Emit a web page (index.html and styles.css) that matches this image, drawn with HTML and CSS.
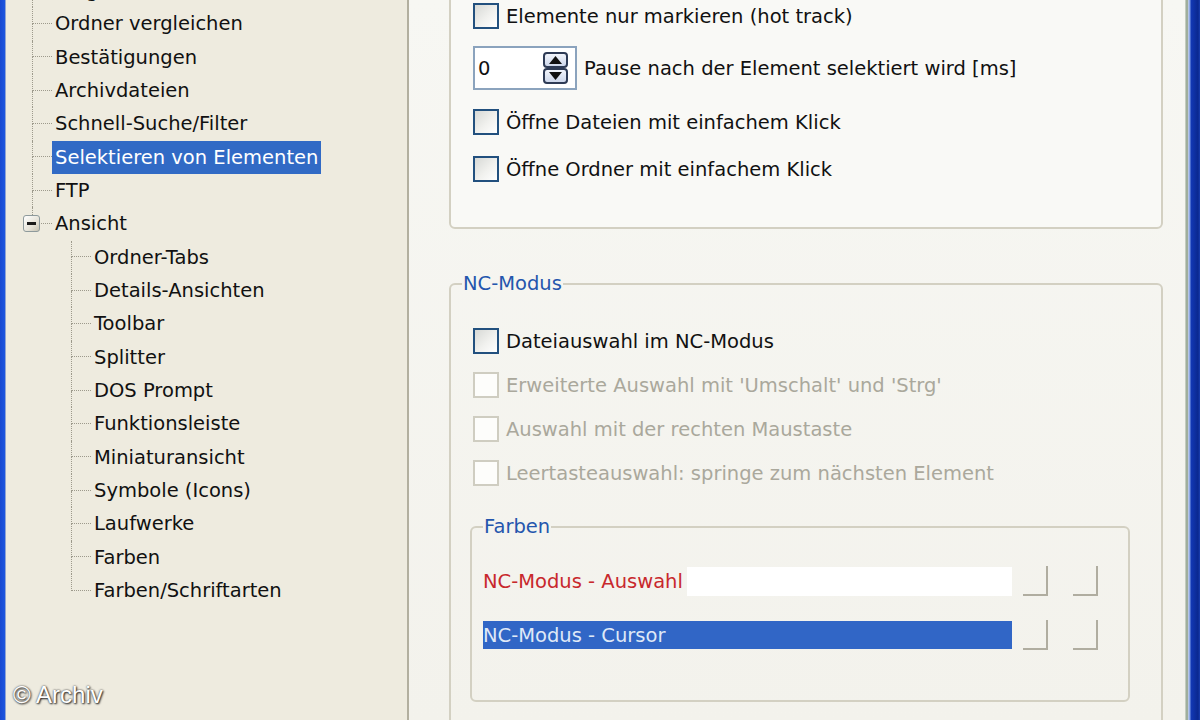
FILE: index.html
```html
<!DOCTYPE html>
<html lang="de">
<head>
    <meta charset="UTF-8">
    <meta name="viewport" content="width=device-width, initial-scale=1.0">
    <title>Einstellungen - Selektieren von Elementen</title>
    <link rel="stylesheet" href="styles.css">
</head>
<body>
    <div class="frame-left"></div>

    <!-- Tree of settings pages -->
    <div class="tree">
        <ul class="tree-list">
            <li class="node l1"><span class="indent"></span><span class="branch"><i class="up"></i><i class="down"></i></span><span class="label">Programmstart</span></li>
            <li class="node l1"><span class="indent"></span><span class="branch"><i class="up"></i><i class="down"></i></span><span class="label">Ordner vergleichen</span></li>
            <li class="node l1"><span class="indent"></span><span class="branch"><i class="up"></i><i class="down"></i></span><span class="label">Bestätigungen</span></li>
            <li class="node l1"><span class="indent"></span><span class="branch"><i class="up"></i><i class="down"></i></span><span class="label">Archivdateien</span></li>
            <li class="node l1"><span class="indent"></span><span class="branch"><i class="up"></i><i class="down"></i></span><span class="label">Schnell-Suche/Filter</span></li>
            <li class="node l1"><span class="indent"></span><span class="branch"><i class="up"></i><i class="down"></i></span><span class="label selected">Selektieren von Elementen</span></li>
            <li class="node l1"><span class="indent"></span><span class="branch"><i class="up"></i><i class="down"></i></span><span class="label">FTP</span></li>
            <li class="node l1">
                <span class="indent short"></span>
                <span class="toggle-col"><i class="up"></i><span class="toggle"><span class="minus"></span></span><i class="down"></i></span>
                <span class="stub"></span>
                <span class="label">Ansicht</span>
            </li>
            <li class="node l2"><span class="indent"></span><span class="branch"><i class="up"></i><i class="down"></i></span><span class="label">Ordner-Tabs</span></li>
            <li class="node l2"><span class="indent"></span><span class="branch"><i class="up"></i><i class="down"></i></span><span class="label">Details-Ansichten</span></li>
            <li class="node l2"><span class="indent"></span><span class="branch"><i class="up"></i><i class="down"></i></span><span class="label">Toolbar</span></li>
            <li class="node l2"><span class="indent"></span><span class="branch"><i class="up"></i><i class="down"></i></span><span class="label">Splitter</span></li>
            <li class="node l2"><span class="indent"></span><span class="branch"><i class="up"></i><i class="down"></i></span><span class="label">DOS Prompt</span></li>
            <li class="node l2"><span class="indent"></span><span class="branch"><i class="up"></i><i class="down"></i></span><span class="label">Funktionsleiste</span></li>
            <li class="node l2"><span class="indent"></span><span class="branch"><i class="up"></i><i class="down"></i></span><span class="label">Miniaturansicht</span></li>
            <li class="node l2"><span class="indent"></span><span class="branch"><i class="up"></i><i class="down"></i></span><span class="label">Symbole (Icons)</span></li>
            <li class="node l2"><span class="indent"></span><span class="branch"><i class="up"></i><i class="down"></i></span><span class="label">Laufwerke</span></li>
            <li class="node l2"><span class="indent"></span><span class="branch"><i class="up"></i><i class="down"></i></span><span class="label">Farben</span></li>
            <li class="node l2"><span class="indent"></span><span class="branch end"><i class="up"></i><i class="down"></i></span><span class="label">Farben/Schriftarten</span></li>
        </ul>
    </div>

    <!-- Settings page -->
    <div class="pane">
        <div class="group top-group">
            <div class="row r1"><span class="check"></span><span class="text">Elemente nur markieren (hot track)</span></div>
            <div class="row r2">
                <div class="spin">
                    <span class="spin-value">0</span>
                    <span class="spin-buttons">
                        <span class="spin-btn">
                            <svg width="13" height="8" viewBox="0 0 13 8"><polygon points="6.5,0 13,8 0,8" fill="#111"/></svg>
                        </span>
                        <span class="spin-btn">
                            <svg width="13" height="8" viewBox="0 0 13 8"><polygon points="0,0 13,0 6.5,8" fill="#111"/></svg>
                        </span>
                    </span>
                </div>
                <span class="text spin-label">Pause nach der Element selektiert wird [ms]</span>
            </div>
            <div class="row r3"><span class="check"></span><span class="text">Öffne Dateien mit einfachem Klick</span></div>
            <div class="row r3"><span class="check"></span><span class="text">Öffne Ordner mit einfachem Klick</span></div>
        </div>

        <fieldset class="box nc-box">
            <legend>NC-Modus</legend>
            <div class="row nc"><span class="check"></span><span class="text">Dateiauswahl im NC-Modus</span></div>
            <div class="row nc disabled"><span class="check"></span><span class="text">Erweiterte Auswahl mit 'Umschalt' und 'Strg'</span></div>
            <div class="row nc disabled"><span class="check"></span><span class="text">Auswahl mit der rechten Maustaste</span></div>
            <div class="row nc disabled"><span class="check"></span><span class="text">Leertasteauswahl: springe zum nächsten Element</span></div>

            <fieldset class="box colors-box">
                <legend>Farben</legend>
                <div class="color-row">
                    <div class="swatch light"><span class="swatch-text">NC-Modus - Auswahl</span><span class="swatch-fill"></span></div>
                    <span class="pick"></span>
                    <span class="pick"></span>
                </div>
                <div class="color-row second">
                    <div class="swatch dark"><span class="swatch-text">NC-Modus - Cursor</span></div>
                    <span class="pick"></span>
                    <span class="pick"></span>
                </div>
            </fieldset>
        </fieldset>
    </div>

    <div class="frame-right"></div>

    <div class="credit">© Archiv</div>
</body>
</html>
```

FILE: styles.css
```css
body {
    margin: 0;
    width: 1200px;
    height: 720px;
    overflow: hidden;
    display: flex;
    position: relative;
    font-family: "DejaVu Sans", Verdana, sans-serif;
    font-size: 19.5px;
    color: #111;
    background-color: #f5f4ef;
}

.frame-left {
    width: 6px;
    flex-shrink: 0;
    background: linear-gradient(to right, #1848d0 0, #1d56e0 5px, #8fa4d4 5px);
}

.frame-right {
    width: 15px;
    flex-shrink: 0;
    background: linear-gradient(to right, #e8e8e2 0, #9fae9c 1px, #9fae9c 3px, #c9d2e6 3px, #7e9de6 5px, #1238b4 6px, #0a2890 13px, #1a3fb0 15px);
}

/* ---------- tree ---------- */

.tree {
    width: 401px;
    flex-shrink: 0;
    background-color: #eeebdf;
    border-right: 2px solid #b2af9f;
}

.tree-list {
    list-style: none;
    margin: -26px 0 0 0;
    padding: 0;
}

.node {
    display: flex;
    height: 33.33px;
    white-space: nowrap;
}

.node.l1 .indent { width: 26px; }
.node.l1 .indent.short { width: 17px; }
.node.l2 .indent { width: 65px; }

.indent, .branch, .toggle-col, .stub {
    flex-shrink: 0;
}

.branch {
    width: 20px;
    display: flex;
    flex-direction: column;
}

.branch .up {
    height: 50%;
    border-left: 1px dotted #9d9a8c;
    border-bottom: 1px dotted #9d9a8c;
    box-sizing: border-box;
}

.branch .down {
    height: 50%;
    border-left: 1px dotted #9d9a8c;
}

.branch.end .down {
    border-left: none;
}

.toggle-col {
    width: 18px;
    display: flex;
    flex-direction: column;
}

.toggle-col .up {
    flex: 1;
    margin-left: 9px;
    border-left: 1px dotted #9d9a8c;
}

.toggle-col .down {
    flex: 1;
}

.toggle {
    width: 17px;
    height: 17px;
    box-sizing: border-box;
    border: 1px solid #8e9a9c;
    border-radius: 3px;
    background: linear-gradient(135deg, #ffffff 0%, #e6e3d8 60%, #c6c2b2 100%);
    display: flex;
    align-items: center;
    justify-content: center;
}

.minus {
    width: 9px;
    height: 3px;
    background-color: #1a1a1a;
}

.stub {
    width: 11px;
    height: 50%;
    border-bottom: 1px dotted #9d9a8c;
    box-sizing: border-box;
}

.label {
    padding: 0 3px;
    line-height: 33px;
    height: 33px;
}

.label.selected {
    background-color: #316ac5;
    color: #fff;
}

/* ---------- settings page ---------- */

.pane {
    flex: 1;
    padding: 0 22px 0 40px;
    background: linear-gradient(to bottom, #f7f7f3, #f3f2ec);
}

.group {
    border: 2px solid #d3d0c2;
    border-radius: 6px;
    background-color: #f9f9f6;
}

.top-group {
    margin-top: -40px;
    padding: 39px 0 43px 22px;
}

.row {
    display: flex;
    align-items: center;
    height: 30px;
}

.top-group .r2 {
    height: 44px;
    margin-top: 15px;
}

.top-group .r3 {
    margin-top: 17px;
}

.check {
    width: 26px;
    height: 26px;
    box-sizing: border-box;
    flex-shrink: 0;
    border: 2px solid #22507e;
    background: linear-gradient(135deg, #d7d9d6 0%, #f1f1ee 55%, #ffffff 100%);
}

.text {
    margin-left: 7px;
    white-space: nowrap;
}

.disabled .check {
    border-color: #cfcdc1;
    background: #fdfdfb;
}

.disabled .text {
    color: #aaa89c;
}

.spin {
    width: 104px;
    height: 44px;
    box-sizing: border-box;
    border: 2px solid #8ba3bd;
    background-color: #fff;
    display: flex;
    align-items: center;
    padding-left: 3px;
}

.spin-value {
    flex: 1;
}

.spin-buttons {
    display: flex;
    flex-direction: column;
    margin-right: 7px;
}

.spin-btn {
    width: 25px;
    height: 16px;
    box-sizing: border-box;
    border: 2px solid #2e3b55;
    border-radius: 4px;
    background: linear-gradient(to bottom, #f2f5fb, #cdd7ea);
    display: flex;
    align-items: center;
    justify-content: center;
}

.spin-label {
    margin-left: 7px;
}

/* fieldsets with titles */

.box {
    margin: 0;
    min-width: 0;
    border: 2px solid #d3d0c2;
    border-radius: 6px;
}

.box legend {
    padding: 0 1px;
    line-height: 24px;
    color: #2456ad;
}

.nc-box {
    margin-top: 43px;
    padding: 30px 0 60px 11px;
}

.nc-box .row {
    margin-left: 11px;
}

.nc-box .row.disabled {
    margin-top: 14px;
}

.colors-box {
    margin: 27px 31px 0 8px;
    padding: 27px 0 50px 11px;
}

.color-row {
    display: flex;
    align-items: center;
    height: 30px;
}

.color-row.second {
    margin-top: 24px;
}

.swatch {
    width: 529px;
    height: 29px;
    display: flex;
    align-items: center;
    white-space: nowrap;
}

.swatch.light .swatch-text {
    color: #c8282c;
    padding-right: 4px;
}

.swatch-fill {
    flex: 1;
    align-self: stretch;
    background-color: #fff;
}

.swatch.dark {
    height: 28px;
    background-color: #3166c6;
    color: #dfe8f7;
}

.pick {
    width: 25px;
    height: 30px;
    box-sizing: border-box;
    margin-left: 11px;
    border-right: 2px solid #b0ada0;
    border-bottom: 2px solid #b0ada0;
}

.pick + .pick {
    margin-left: 25px;
}

/* watermark over the screenshot */

.credit {
    position: absolute;
    left: 13px;
    bottom: 11px;
    font-family: "Liberation Sans", Arial, sans-serif;
    font-size: 24px;
    color: #fff;
    text-shadow: 0 0 2px #333, 1px 1px 2px #222;
}
```
